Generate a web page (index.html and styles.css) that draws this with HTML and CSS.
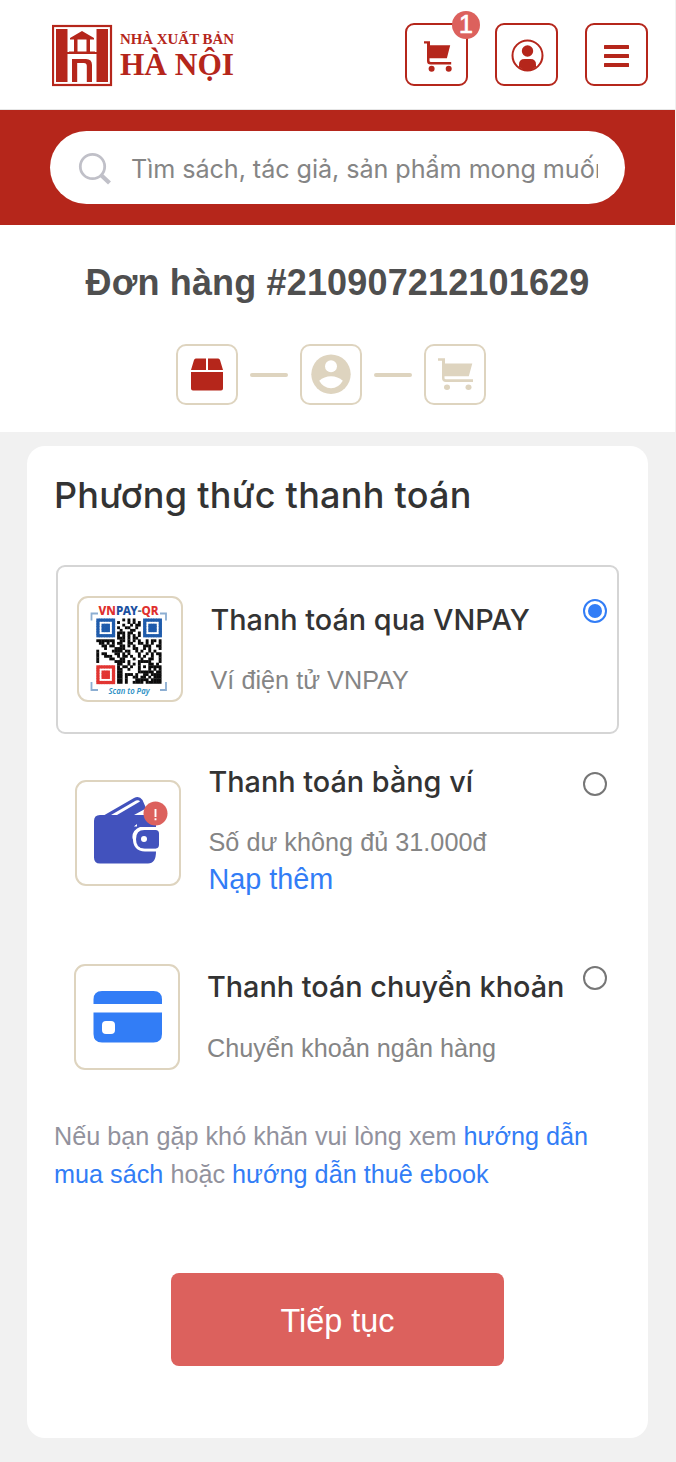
FILE: index.html
```html
<!DOCTYPE html>
<html lang="vi">
<head>
<meta charset="utf-8">
<title>Nhà xuất bản Hà Nội</title>
<link rel="stylesheet" href="styles.css">
</head>
<body>
<div class="page">
  <header class="header">
    <svg class="logo" width="184" height="64" viewBox="0 0 184 64">
      <rect x="1" y="2" width="58" height="59" fill="#fff" stroke="#b5261b" stroke-width="2.2"/>
      <path fill="#b5261b" d="M4 5h11.500v23h29V5h11.500v53H44.500V30h-29v28H4zM18 14l12-7 12 7v1.500H18zM22 15h3.500v13H22zM34.500 15H38v13h-3.500zM20 35h14q6 0 6 6v17h-5.200V42q0-3-3-3h-6.600v19H20z"/>
      <path d="M17 28.500h26" stroke="#b5261b" stroke-width="2"/>
      <text class="logo-text" x="68" y="20" font-size="15.200" textLength="114" lengthAdjust="spacingAndGlyphs">NHÀ XUẤT BẢN</text>
      <text class="logo-text" x="68" y="51" font-size="31" textLength="114" lengthAdjust="spacingAndGlyphs">HÀ NỘI</text>
    </svg>
    <nav class="actions">
      <div class="action">
        <svg width="59" height="59" viewBox="0 0 59 59" fill="#b5261b"><path d="M17 16.300h6v4h20.200l-3.300 13H22.500v2.500q0 1.200 1.500 1.200h20.200v2.500H23.500q-3.500 0-3.500-3.500V18.500h-3z"/><circle cx="24.600" cy="43.800" r="3"/><circle cx="41.700" cy="43.800" r="3"/></svg>
        <span class="badge">1</span>
      </div>
      <div class="action">
        <svg width="59" height="59" viewBox="0 0 59 59"><circle cx="30.500" cy="30.500" r="15" fill="none" stroke="#b5261b" stroke-width="2"/><circle cx="30.500" cy="26" r="5.700" fill="#b5261b"/><path fill="#b5261b" d="M22 42v-2.500q0-5.500 5.500-5.500h6q5.500 0 5.500 5.500V42q-8.500 7-17 0z"/></svg>
      </div>
      <div class="action">
        <svg width="59" height="59" viewBox="0 0 59 59" fill="#b5261b"><rect x="17" y="20" width="25" height="4" rx=".5"/><rect x="17" y="29" width="25" height="4" rx=".5"/><rect x="17" y="38" width="25" height="4" rx=".5"/></svg>
      </div>
    </nav>
  </header>

  <div class="search-bar">
    <div class="search">
      <svg width="36" height="36" viewBox="0 0 36 36" fill="none" stroke="#c0c0c8"><circle cx="15.500" cy="15.500" r="12.200" stroke-width="2.800"/><path d="M24 24l8.500 8" stroke-width="4.200"/></svg>
      <div class="placeholder">Tìm sách, tác giả, sản phẩm mong muốn</div>
    </div>
  </div>

  <section class="order">
    <h1 class="order-title">Đơn hàng #210907212101629</h1>
    <div class="steps">
      <div class="step"><svg width="58" height="58" viewBox="0 0 58 58" fill="#b5261b"><path d="M17.800 12.500H28V24H13l3-10q.5-1.500 1.800-1.500zM30 12.500h10.200q1.300 0 1.800 1.500l3 10H30zM13 26h32v16.500q0 2-2 2H15q-2 0-2-2z"/></svg></div>
      <span class="dash"></span>
      <div class="step"><svg width="58" height="58" viewBox="0 0 58 58"><circle cx="29" cy="28.300" r="19.700" fill="#ded4bf"/><circle cx="29" cy="20.300" r="6" fill="#fff"/><path fill="#fff" d="M17.200 34.800q5-4.500 11.800-4.500t11.800 4.500Q36.500 42.300 29 42.300t-11.800-7.500z"/></svg></div>
      <span class="dash"></span>
      <div class="step"><svg width="58" height="58" viewBox="0 0 58 58" fill="#ded4bf"><path d="M12 12.200h7v5.200h27.300l-3.500 12.800H18.500v2q0 1 1.500 1H47v2.700H20q-4 0-4-4V14.700h-4z"/><ellipse cx="21" cy="41.200" rx="3" ry="2.700"/><ellipse cx="42.500" cy="41.200" rx="3" ry="2.700"/></svg></div>
    </div>
  </section>

  <main class="card">
    <h2 class="heading">Phương thức thanh toán</h2>

    <div class="option option-vnpay">
      <div class="thumb">
        <svg width="102" height="102" viewBox="0 0 102 102">
          <text class="qr-brand" x="19.500" y="16.500" font-size="12.500" textLength="60" lengthAdjust="spacingAndGlyphs"><tspan fill="#df302d">VN</tspan><tspan fill="#1c4f9f">PAY</tspan><tspan fill="#657487">-</tspan><tspan fill="#df302d">QR</tspan></text>
          <path d="M19 15.500h-6.500v7M81 15.500h6v7M12.500 84v8h6.500M81 92h6v-8" fill="none" stroke="#8caed2" stroke-width="1.800"/>
          <g id="qr-cells" transform="translate(17.300 20.500) scale(2.600)"></g>
          <text class="qr-scan" x="29.500" y="95.500" font-size="9" textLength="41" lengthAdjust="spacingAndGlyphs">Scan to Pay</text>
        </svg>
      </div>
      <div class="info"><h3>Thanh toán qua VNPAY</h3><p>Ví điện tử VNPAY</p></div>
      <span class="radio checked"></span>
    </div>

    <div class="option option-wallet">
      <div class="thumb">
        <svg width="102" height="102" viewBox="0 0 102 102">
          <path fill="#4252bd" d="M17 39q0-6 6-6h4.500L57 16q5-3 8.500 2L72 33h7v7H67q-12 1-12 12t12 14.500h12v3q0 12-8 12H23q-6 0-6-6z"/>
          <path fill="#fff" d="M34 33L59 18.500q3-1 4 1L40 33zM57 33l11-6v6z"/>
          <path fill="#4252bd" d="M60 36h19v9H60z"/>
          <path fill="none" stroke="#fff" stroke-width="3" d="M83 46.500H68q-10.500 0-10.500 10.500T68 68h15"/>
          <path fill="#4252bd" d="M55 44.500h9q-9 3-9 12z"/>
          <path fill="#4252bd" d="M67.500 48H78.500q3.500 0 3.500 3.500v11.300q0 3.700-3.500 3.700H67.500q-8.500 0-8.500-9.300T67.500 48z"/>
          <circle cx="67" cy="57" r="3" fill="#fff"/>
          <circle cx="78.500" cy="31.500" r="12" fill="#dc615d"/>
          <path d="M78.500 27v8M78.500 36.300v2" stroke="#fff" stroke-width="1.900"/>
        </svg>
      </div>
      <div class="info"><h3>Thanh toán bằng ví</h3><p>Số dư không đủ 31.000đ</p><a class="topup">Nạp thêm</a></div>
      <span class="radio"></span>
    </div>

    <div class="option option-bank">
      <div class="thumb">
        <svg width="102" height="102" viewBox="0 0 102 102" fill="#327df6"><path d="M17.500 38v-4.500q0-8.500 8.500-8.500h51.500q8.500 0 8.500 8.500V38zM17.500 46.500H86V68q0 8.500-8.500 8.500H26q-8.500 0-8.500-8.500z"/><rect x="26" y="55" width="13" height="13" rx="4" fill="#fff"/></svg>
      </div>
      <div class="info"><h3>Thanh toán chuyển khoản</h3><p>Chuyển khoản ngân hàng</p></div>
      <span class="radio"></span>
    </div>

    <p class="help">Nếu bạn gặp khó khăn vui lòng xem <a>hướng dẫn<br>mua sách</a> hoặc <a>hướng dẫn thuê ebook</a></p>
    <button class="submit">Tiếp tục</button>
  </main>
</div>
<script src="qr.js"></script>
</body>
</html>
```
FILE: qr.js
```js
// QR modules: # black, b blue finder, r red finder
const rows = [
  'bbbbbbb...#.#.#...bbbbbbb',
  'b.....b.#...#.#.#.b.....b',
  'b.bbb.b...#..#.##.b.bbb.b',
  'b.bbb.b.#..##..#..b.bbb.b',
  'b.bbb.b..#...##...b.bbb.b',
  'b.....b.###.##..#.b.....b',
  'bbbbbbb.#.#.#.#.#.bbbbbbb',
  '........###.#.##.........',
  '#######..##.#.#.#..#.##.#',
  '.##.#.#.##..##..##.#.#..#',
  '..##.##..##.#.#...###..##',
  '...#...####...##..#.#...#',
  '#.....####.##..#.#..#.#..',
  '#.##...##.#.#...#..#.#.##',
  '#..###..#.##.#..#.#..#..#',
  '#....##..##...#..#..##..#',
  '#......####.#...#####...#',
  '........##..#.#.#...##.#.',
  'rrrrrrr.#.##.#..#.#.#####',
  'r.....r.##..#...#...#.#.#',
  'r.rrr.r.##......######.##',
  'r.rrr.r.##.###.#..##.####',
  'r.rrr.r.##.#..##.##.#.###',
  'r.....r.##.#...#####.####',
  'rrrrrrr.##.#..####.######'
];
const colors = { '#': '#0b0b0b', b: '#1e5bab', r: '#e23431' };
const cells = document.getElementById('qr-cells');
rows.forEach((row, y) => {
  [...row].forEach((c, x) => {
    if (!colors[c]) return;
    const cell = document.createElementNS('http://www.w3.org/2000/svg', 'rect');
    const size = c === '#' ? 1.1 : 1.25;
    cell.setAttribute('x', x);
    cell.setAttribute('y', y);
    cell.setAttribute('width', size);
    cell.setAttribute('height', size);
    cell.setAttribute('fill', colors[c]);
    cells.append(cell);
  });
});
```
FILE: styles.css
```css
* { box-sizing: border-box; }
body { margin: 0; background: #f1f1f1; font-family: "Liberation Sans", Arial, sans-serif; }
h1, h2, h3, p { margin: 0; }
.page { width: 675px; height: 1462px; }
.header { height: 110px; background: #fff; border-bottom: 1px solid #e6e6e6; display: flex; justify-content: space-between; padding: 24px 27px 0 52px; }
.logo-text { font-family: "Liberation Serif", serif; font-weight: 700; fill: #b5261b; }
.actions { display: flex; gap: 27px; margin-top: -1px; }
.action { width: 63px; height: 63px; border: 2px solid #b5261b; border-radius: 9px; position: relative; }
.action svg, .step svg, .thumb svg { display: block; }
.badge { position: absolute; top: -14px; right: -14px; width: 28px; height: 28px; border-radius: 50%; background: #dc615d; color: #fff; font-size: 25px; line-height: 27px; text-align: center; -webkit-text-stroke: .7px #fff; }
.search-bar { height: 115px; background: #b5261b; padding: 21px 50px; }
.search { height: 73px; width: 575px; border-radius: 37px; background: #fff; display: flex; align-items: center; padding: 3px 27px 0 27px; }
.search svg { flex: none; }
.placeholder { margin-left: 18px; width: 467px; overflow: hidden; white-space: nowrap; font: 400 25.2px/40px Inter, sans-serif; letter-spacing: -.07px; color: #858585; }
.order { height: 207px; background: #fff; }
.order-title { padding-top: 35px; text-align: center; font-size: 36px; line-height: 45px; letter-spacing: .16px; color: #4f4f4f; white-space: nowrap; }
.steps { display: flex; align-items: center; gap: 12.6px; margin: 39px 0 0 176px; }
.step { width: 61.5px; height: 61px; border: 2px solid #ded4bf; border-radius: 10px; }
.dash { width: 37.5px; height: 4px; border-radius: 2px; background: #ded4bf; }
.card { width: 621px; height: 992px; margin: 14px 0 0 27px; border-radius: 18px; background: #fff; padding: 27px 27px 0; }
.heading { font: 500 36px/45px Inter, sans-serif; letter-spacing: .27px; color: #333; white-space: nowrap; }
.option { display: flex; align-items: flex-start; height: 169px; width: 563px; margin-left: 2px; }
.option-vnpay { margin-top: 47px; border: 2px solid #d5d5d5; border-radius: 9px; padding: 29px 10px 0 19px; }
.option-wallet { padding: 26px 12px 0 19px; height: 230px; margin-top: 20px; }
.option-bank { padding: 1px 12px 0 19px; height: 140px; margin-top: -21px; margin-left: 1px; width: 564px; }
.thumb { flex: none; width: 106px; height: 106px; border: 2px solid #ded4bf; border-radius: 11px; }
.info { margin-left: 27.5px; flex: 1; white-space: nowrap; }
.info h3 { font: 500 28.8px/45px Inter, sans-serif; color: #333; }
.info p { margin-top: 20px; font-size: 25.2px; line-height: 38px; letter-spacing: .03px; color: #858585; }
.option-vnpay .info { margin-top: 1px; }
.option-vnpay .info p { margin-top: 19px; }
.topup { display: block; font-size: 28.8px; line-height: 36px; color: #327df6; }
.option-wallet .info { margin-top: -21px; }
.option-wallet .info p { margin-top: 19px; }
.option-bank .info { margin-left: 27px; }
.radio { flex: none; width: 24px; height: 24px; border: 2px solid #767676; border-radius: 50%; display: grid; place-items: center; margin-top: 3px; }
.checked { border-color: #327df6; }
.checked::after { content: ""; width: 14px; height: 14px; border-radius: 50%; background: #327df6; }
.option-wallet .radio { margin-top: -8px; }
.option-bank .radio { margin-top: 2px; }
.qr-brand { font-family: "Noto Sans", sans-serif; font-weight: 800; }
.qr-scan { font-family: "Noto Sans", sans-serif; font-style: italic; font-weight: 600; fill: #2a8fc5; }
.help { font-size: 25.2px; line-height: 38px; letter-spacing: .02px; color: #92929d; white-space: nowrap; margin-top: 14px; }
.help a { color: #327df6; }
.submit { display: block; width: 333px; height: 93px; margin: 80px auto 0; border: 0; border-radius: 8px; background: #dc615d; color: #fff; font: 400 32.4px/89px "Liberation Sans", Arial, sans-serif; padding: 4px 0 0; }
```
